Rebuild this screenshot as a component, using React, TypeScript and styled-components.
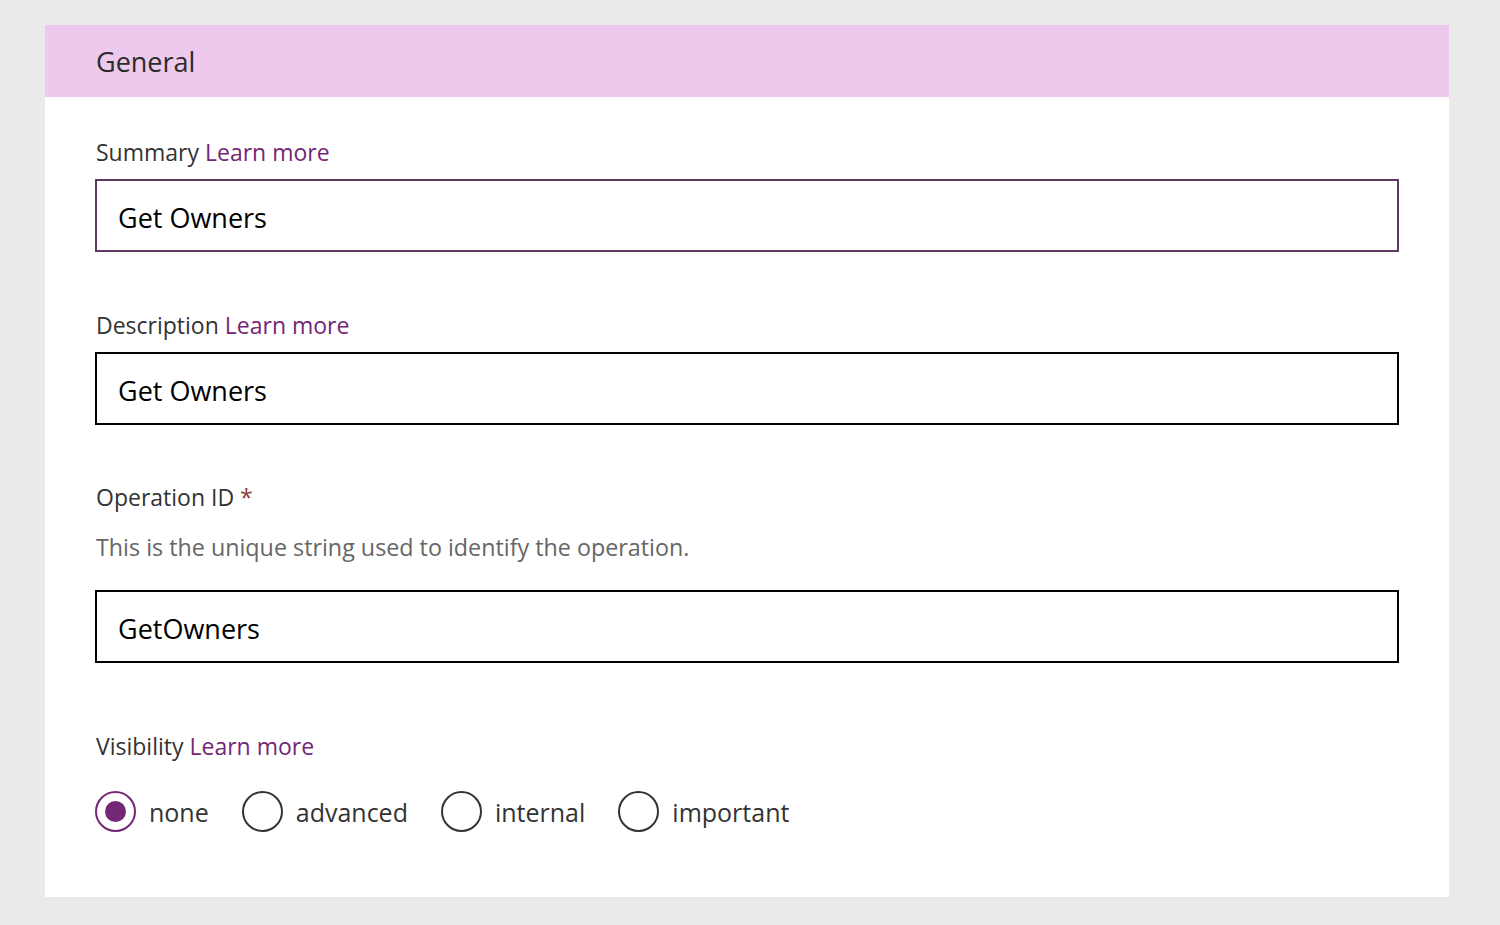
import React from 'react'
import styled, { createGlobalStyle } from 'styled-components'

const GlobalStyle = createGlobalStyle`
  html, body {
    margin: 0;
    padding: 0;
    background: #eaeaea;
    font-family: 'Open Sans', 'Noto Sans', sans-serif;
  }
`

const Page = styled.div`
  padding: 25px 51px 29px 45px;
`

const Card = styled.section`
  background: #ffffff;
  width: 1404px;
`

const Header = styled.div`
  height: 72px;
  background: #edcaed;
  display: flex;
  align-items: center;
  padding-left: 51px;
  font-size: 27px;
  color: #2b2b2b;
`

const Body = styled.div`
  padding: 40px 50px 65px 50px;
  display: flex;
  flex-direction: column;
`

const Field = styled.div<{ $gap: number }>`
  display: flex;
  flex-direction: column;
  margin-top: ${(p) => p.$gap}px;
`

const Label = styled.div`
  font-size: 23px;
  line-height: 30px;
  color: #333;
  padding-left: 1px;
`

const LearnMore = styled.a`
  color: #742774;
  text-decoration: none;
`

const Required = styled.span`
  color: #8a3b3b;
`

const Help = styled.div`
  font-size: 23.3px;
  line-height: 30px;
  color: #666;
  margin-top: 20px;
  padding-left: 1px;
`

const Input = styled.input<{ $focused?: boolean; $gap?: number }>`
  box-sizing: border-box;
  width: 100%;
  height: 73px;
  margin-top: ${(p) => p.$gap ?? 12}px;
  border: 2px solid ${(p) => (p.$focused ? '#5c3b5f' : '#000')};
  padding: 4px 21px 0;
  font-family: inherit;
  font-size: 27px;
  color: #000;
  outline: none;
`

const RadioRow = styled.div`
  display: flex;
  align-items: center;
  gap: 33px;
  margin-top: 30px;
`

const RadioOption = styled.label`
  display: flex;
  align-items: center;
  gap: 13px;
  font-size: 25px;
  color: #333;
`

const Circle = styled.span<{ $checked?: boolean }>`
  box-sizing: border-box;
  width: 41px;
  height: 41px;
  border-radius: 50%;
  border: 2px solid ${(p) => (p.$checked ? '#742774' : '#333')};
  display: flex;
  align-items: center;
  justify-content: center;

  &::after {
    content: '';
    width: 21px;
    height: 21px;
    border-radius: 50%;
    background: ${(p) => (p.$checked ? '#742774' : 'transparent')};
  }
`

const options = ['none', 'advanced', 'internal', 'important']

export default function App() {
  return (
    <Page>
      <GlobalStyle />
      <Card>
        <Header>General</Header>
        <Body>
          <Field $gap={0}>
            <Label>
              Summary <LearnMore href="#">Learn more</LearnMore>
            </Label>
            <Input $focused defaultValue="Get Owners" />
          </Field>
          <Field $gap={58}>
            <Label>
              Description <LearnMore href="#">Learn more</LearnMore>
            </Label>
            <Input defaultValue="Get Owners" />
          </Field>
          <Field $gap={57}>
            <Label>
              Operation ID <Required>*</Required>
            </Label>
            <Help>This is the unique string used to identify the operation.</Help>
            <Input $gap={28} defaultValue="GetOwners" />
          </Field>
          <Field $gap={68}>
            <Label>
              Visibility <LearnMore href="#">Learn more</LearnMore>
            </Label>
            <RadioRow>
              {options.map((o) => (
                <RadioOption key={o}>
                  <Circle $checked={o === 'none'} />
                  {o}
                </RadioOption>
              ))}
            </RadioRow>
          </Field>
        </Body>
      </Card>
    </Page>
  )
}
